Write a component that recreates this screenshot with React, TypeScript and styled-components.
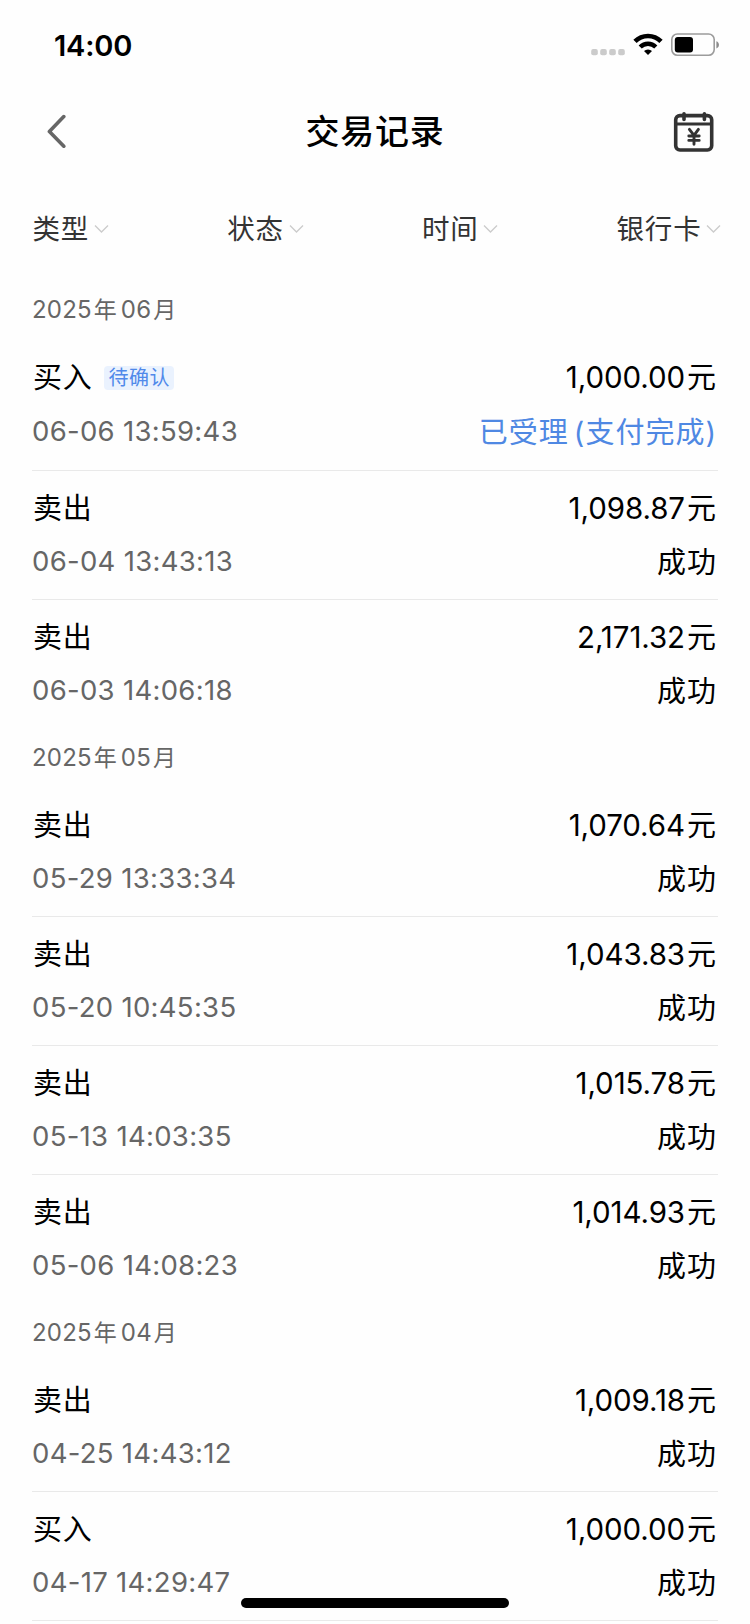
import React from 'react';
import styled, { createGlobalStyle } from 'styled-components';

const GlobalStyle = createGlobalStyle`
  * { box-sizing: border-box; }
  body {
    margin: 0;
    background: #fff;
    color: #000;
    font-family: Inter, "Noto Sans CJK SC", sans-serif;
    text-autospace: no-autospace;
  }
`;

const Screen = styled.div`
  position: relative;
  width: 750px;
  height: 1624px;
  overflow: hidden;
  background: #fefefe;
`;

const StatusBar = styled.div`
  display: flex;
  align-items: center;
  justify-content: space-between;
  height: 90px;
  padding: 0 30px 0 54px;
`;

const Clock = styled.div`
  padding-top: 1px;
  font-size: 29px;
  font-weight: 600;
  line-height: 40px;
  letter-spacing: -0.2px;
`;

const NavBar = styled.header`
  display: grid;
  grid-template-columns: 60px 1fr 60px;
  align-items: center;
  height: 84px;
  padding: 0 30px;
`;

const NavButton = styled.button<{ $end?: boolean }>`
  display: flex;
  justify-content: ${(p) => (p.$end ? 'flex-end' : 'flex-start')};
  align-items: center;
  height: 60px;
  padding: ${(p) => (p.$end ? '0 5px 0 0' : '0 0 0 16px')};
  border: 0;
  background: none;
`;

const Title = styled.h1`
  margin: 0;
  text-align: center;
  font-size: 34px;
  font-weight: 500;
  line-height: 50px;
  letter-spacing: 0.7px;
`;

const Filters = styled.nav`
  display: flex;
  justify-content: space-between;
  align-items: center;
  height: 107px;
  padding: 2px 28.5px 0 32.5px;
`;

const Filter = styled.button`
  display: flex;
  align-items: center;
  gap: 5px;
  padding: 0;
  border: 0;
  background: none;
  color: #333;
  font: inherit;
  font-size: 27.5px;
  line-height: 40px;
  letter-spacing: 0.8px;
`;

const MonthHeader = styled.h2`
  display: flex;
  align-items: center;
  height: 59px;
  margin: 0;
  padding: 0 0 2px 32px;
  color: #666;
  font-size: 23px;
  font-weight: 400;
  line-height: 34px;
`;

const MonthDigits = styled.span`
  font-size: 24px;
  letter-spacing: 0.2px;
`;

const MonthUnit = styled.span`
  margin: 0 4px 0 2px;
`;

const Record = styled.article<{ $tall?: boolean; $last?: boolean }>`
  display: grid;
  grid-template-rows: ${(p) => (p.$tall ? '52px 56px' : '52px 54px')};
  height: ${(p) => (p.$tall ? 131 : 129)}px;
  margin: 0 32px;
  padding-top: 12px;
  border-bottom: 1px solid ${(p) => (p.$last ? 'transparent' : '#e9e9e9')};
`;

const Line = styled.div`
  display: flex;
  align-items: center;
  justify-content: space-between;
`;

const Kind = styled.div`
  display: flex;
  align-items: center;
  gap: 12px;
  padding-left: 1px;
  font-size: 29px;
  line-height: 42px;
  letter-spacing: 0.7px;
`;

const Badge = styled.span`
  display: flex;
  align-items: center;
  height: 24px;
  padding: 0 4px;
  border-radius: 4px;
  background: #eaf2fe;
  color: #5089ea;
  font-size: 20px;
  line-height: 24px;
  letter-spacing: 0.6px;
`;

const Amount = styled.div`
  display: flex;
  align-items: center;
  padding-right: 2px;
  font-size: 29px;
  line-height: 42px;
`;

const Figure = styled.span`
  padding-bottom: 2px;
  font-size: 29.5px;
  letter-spacing: -0.08px;
  margin-right: 2px;
`;

const Time = styled.time`
  padding-bottom: 3px;
  color: #666;
  font-size: 27.5px;
  line-height: 40px;
  letter-spacing: 0.3px;
`;

const State = styled.div<{ $pending?: boolean }>`
  padding: 1px 1px 0 0;
  color: ${(p) => (p.$pending ? '#4f88e3' : '#000')};
  font-size: 29px;
  line-height: 42px;
  letter-spacing: 1px;
  word-spacing: -4px;
`;

const HomeIndicator = styled.div`
  position: absolute;
  bottom: 16px;
  left: 241px;
  width: 268px;
  height: 10px;
  border-radius: 5px;
  background: #000;
`;

const StatusIcons = () => (
  <svg width="130" height="24" viewBox="590 33 130 24" fill="none">
    {[591.2, 600.2, 609.2, 618.2].map((x) => (
      <rect key={x} x={x} y="49" width="6.6" height="6.2" rx="2" fill="#cbcbcb" />
    ))}
    <path d="M635 41.4a18.2 18.2 0 0 1 26 0" stroke="#000" strokeWidth="4.6" />
    <path d="M640.2 47a11 11 0 0 1 15.6 0" stroke="#000" strokeWidth="4.4" />
    <path d="M648 55l-4-4a5.8 5.8 0 0 1 8 0z" fill="#000" />
    <rect x="671.8" y="34" width="42.4" height="21.2" rx="5.6" stroke="#9c9c9c" strokeWidth="1.6" />
    <rect x="674.8" y="37" width="18.2" height="15.4" rx="3" fill="#000" />
    <path d="M716.4 41.2c3.4 1.2 3.4 6 0 7.2z" fill="#8c8c8c" />
  </svg>
);

const BackIcon = () => (
  <svg width="20" height="36" viewBox="0 0 20 36" fill="none">
    <path d="M17.8 2.6L3.4 17.4l14.4 14.8" stroke="#666" strokeWidth="3.6" strokeLinecap="round" strokeLinejoin="round" />
  </svg>
);

const CalendarIcon = () => (
  <svg width="42" height="42" viewBox="0 0 42 42" fill="none" stroke="#333" strokeWidth="3.6" strokeLinecap="round">
    <rect x="2.7" y="4.6" width="36" height="34.4" rx="4.2" />
    <path d="M3 13.1h35.4" strokeWidth="3" strokeLinecap="butt" />
    <path d="M11 2.8v5.6M31.4 2.8v5.6" />
    <path d="M16.4 18.4l4.6 6 4.4-6M21 24.6v8.6M15.8 25h10.4M15.8 29.4h10.4" strokeWidth="2.9" />
  </svg>
);

const FilterArrow = () => (
  <svg width="15" height="10" viewBox="0 0 15 10" fill="none">
    <path d="M1 1.6l6.5 6.4L14 1.6" stroke="#ccc" strokeWidth="1.4" />
  </svg>
);

type Entry = { kind: string; time: string; amount: string; state?: string; badge?: string };

const groups: { year: string; month: string; entries: Entry[] }[] = [
  {
    year: '2025',
    month: '06',
    entries: [
      { kind: '买入', time: '06-06 13:59:43', amount: '1,000.00', state: '已受理 (支付完成)', badge: '待确认' },
      { kind: '卖出', time: '06-04 13:43:13', amount: '1,098.87' },
      { kind: '卖出', time: '06-03 14:06:18', amount: '2,171.32' },
    ],
  },
  {
    year: '2025',
    month: '05',
    entries: [
      { kind: '卖出', time: '05-29 13:33:34', amount: '1,070.64' },
      { kind: '卖出', time: '05-20 10:45:35', amount: '1,043.83' },
      { kind: '卖出', time: '05-13 14:03:35', amount: '1,015.78' },
      { kind: '卖出', time: '05-06 14:08:23', amount: '1,014.93' },
    ],
  },
  {
    year: '2025',
    month: '04',
    entries: [
      { kind: '卖出', time: '04-25 14:43:12', amount: '1,009.18' },
      { kind: '买入', time: '04-17 14:29:47', amount: '1,000.00' },
    ],
  },
];

export default function App() {
  return (
    <Screen>
      <GlobalStyle />
      <StatusBar>
        <Clock>14:00</Clock>
        <StatusIcons />
      </StatusBar>
      <NavBar>
        <NavButton aria-label="返回"><BackIcon /></NavButton>
        <Title>交易记录</Title>
        <NavButton $end aria-label="日历"><CalendarIcon /></NavButton>
      </NavBar>
      <Filters>
        {['类型', '状态', '时间', '银行卡'].map((name) => (
          <Filter key={name}>{name}<FilterArrow /></Filter>
        ))}
      </Filters>
      {groups.map((group, g) => (
        <section key={group.month}>
          <MonthHeader>
            <MonthDigits>{group.year}</MonthDigits>
            <MonthUnit>年</MonthUnit>
            <MonthDigits>{group.month}</MonthDigits>
            <MonthUnit>月</MonthUnit>
          </MonthHeader>
          {group.entries.map((entry, i) => (
            <Record
              key={entry.time}
              $tall={!!entry.badge}
              $last={i === group.entries.length - 1 && g < groups.length - 1}
            >
              <Line>
                <Kind>{entry.kind}{entry.badge && <Badge>{entry.badge}</Badge>}</Kind>
                <Amount><Figure>{entry.amount}</Figure>元</Amount>
              </Line>
              <Line>
                <Time>{entry.time}</Time>
                <State $pending={!!entry.state}>{entry.state ?? '成功'}</State>
              </Line>
            </Record>
          ))}
        </section>
      ))}
      <HomeIndicator />
    </Screen>
  );
}
